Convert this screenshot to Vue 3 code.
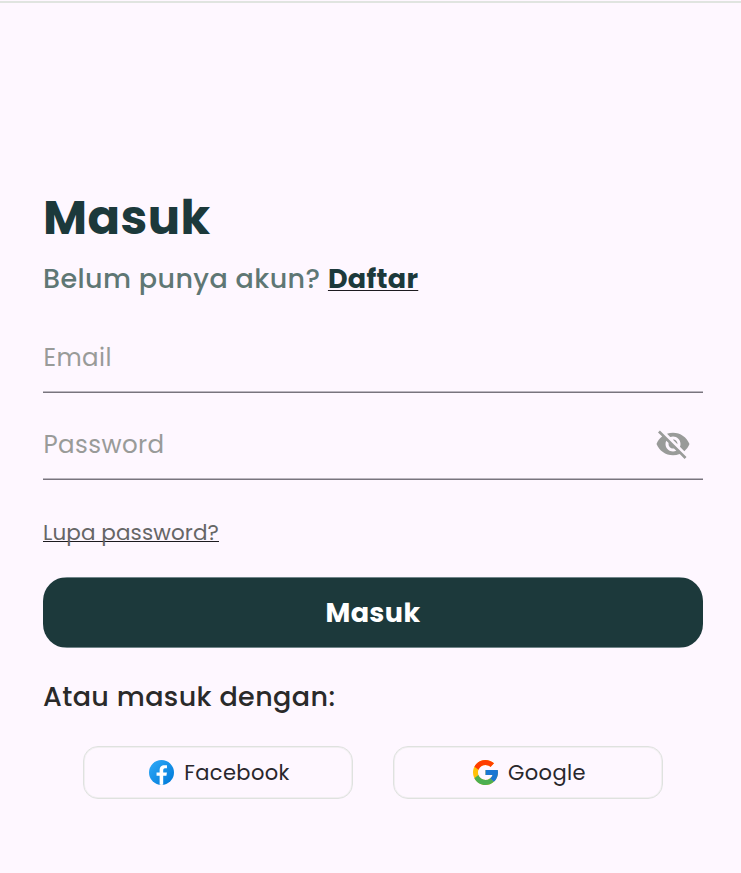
<script setup>
import { ref } from 'vue'

const email = ref('')
const password = ref('')
const visible = ref(false)
</script>

<template>
  <main class="page">
    <h1 class="title"><span>Masuk</span></h1>
    <p class="signup"><span class="question">Belum punya akun?</span><a class="register">Daftar</a></p>

    <form class="form" @submit.prevent>
      <label class="field">
        <input v-model="email" class="input email" type="text" placeholder="Email" />
      </label>
      <label class="field">
        <input v-model="password" class="input password" :type="visible ? 'text' : 'password'" placeholder="Password" />
        <svg class="eye" viewBox="0 0 24 24" @click="visible = !visible">
          <path d="M12 7c2.76 0 5 2.24 5 5 0 .65-.13 1.26-.36 1.83l2.92 2.92c1.51-1.26 2.7-2.89 3.43-4.75-1.73-4.39-6-7.5-11-7.5-1.4 0-2.74.25-3.98.7l2.16 2.16C10.74 7.13 11.35 7 12 7zM2 4.27l2.28 2.28.46.46C3.08 8.3 1.78 10.02 1 12c1.73 4.39 6 7.5 11 7.5 1.55 0 3.03-.3 4.38-.84l.42.42L19.73 22 21 20.73 3.27 3 2 4.27zM7.53 9.8l1.55 1.55c-.05.21-.08.43-.08.65 0 1.66 1.34 3 3 3 .22 0 .44-.03.65-.08l1.55 1.55c-.67.33-1.41.53-2.2.53-2.76 0-5-2.24-5-5 0-.79.2-1.53.53-2.2zm4.31-.78l3.15 3.15.02-.16c0-1.66-1.34-3-3-3l-.17.01z" />
        </svg>
      </label>
      <a class="forgot">Lupa password?</a>
      <button class="submit" type="submit"><span>Masuk</span></button>
    </form>

    <p class="alternative">Atau masuk dengan:</p>
    <div class="socials">
      <button class="social facebook" type="button">
        <svg class="logo" viewBox="5 5 38 38">
          <defs>
            <linearGradient id="fb" x1="9.99" x2="40.59" y1="9.99" y2="40.59" gradientUnits="userSpaceOnUse">
              <stop offset="0" stop-color="#2aa4f4" />
              <stop offset="1" stop-color="#007ad9" />
            </linearGradient>
          </defs>
          <circle cx="24" cy="24" r="19" fill="url(#fb)" />
          <path fill="#fff" d="M26.572 29.036h4.917l.772-4.995h-5.69v-2.73c0-2.075.678-3.915 2.619-3.915h3.119v-4.359c-.548-.074-1.707-.236-3.897-.236-4.573 0-7.254 2.415-7.254 7.917v3.323h-4.701v4.995h4.701v13.729c.931.14 1.874.235 2.842.235.875 0 1.729-.08 2.572-.194z" />
        </svg>
        <span>Facebook</span>
      </button>
      <button class="social google" type="button">
        <svg class="logo" viewBox="4 4 40 40">
          <path fill="#ffc107" d="M43.611 20.083H42V20H24v8h11.303c-1.649 4.657-6.08 8-11.303 8-6.627 0-12-5.373-12-12s5.373-12 12-12c3.059 0 5.842 1.154 7.961 3.039l5.657-5.657C34.046 6.053 29.268 4 24 4 12.955 4 4 12.955 4 24s8.955 20 20 20 20-8.955 20-20c0-1.341-.138-2.65-.389-3.917z" />
          <path fill="#ff3d00" d="m6.306 14.691 6.571 4.819C14.655 15.108 18.961 12 24 12c3.059 0 5.842 1.154 7.961 3.039l5.657-5.657C34.046 6.053 29.268 4 24 4 16.318 4 9.656 8.337 6.306 14.691z" />
          <path fill="#4caf50" d="M24 44c5.166 0 9.86-1.977 13.409-5.192l-6.19-5.238A11.91 11.91 0 0 1 24 36c-5.202 0-9.619-3.317-11.283-7.946l-6.522 5.025C9.505 39.556 16.227 44 24 44z" />
          <path fill="#1976d2" d="M43.611 20.083H42V20H24v8h11.303a12.04 12.04 0 0 1-4.087 5.571l.003-.002 6.19 5.238C36.971 39.205 44 34 44 24c0-1.341-.138-2.65-.389-3.917z" />
        </svg>
        <span>Google</span>
      </button>
    </div>
  </main>
</template>

<style>
body {
  background: #fef7ff;
}
</style>

<style scoped>
.page {
  box-sizing: border-box;
  height: 873px;
  padding: 187px 38px 0 43px;
  background: linear-gradient(#fef7ff 0 1px, #e0e4e0 1px 3px, #fef7ff 3px);
  font-family: Poppins, Inter, sans-serif;
  white-space: nowrap;
  overflow: hidden;
}
.title {
  margin: 0;
  font-size: 48px;
  line-height: 62px;
  font-weight: 700;
  letter-spacing: 0.4px;
  color: #1c393b;
}
.signup {
  display: flex;
  gap: 7.5px;
  margin: 10px 0 0;
  font-size: 27px;
  line-height: 40px;
}
.question {
  font-weight: 500;
  letter-spacing: 0.4px;
  color: #5f7774;
}
.register {
  font-weight: 700;
  letter-spacing: 0.3px;
  color: #1c393b;
  text-decoration: underline 1px #1d1b20;
  text-underline-offset: 2px;
  text-decoration-skip-ink: none;
}
.form {
  display: flex;
  flex-direction: column;
  margin-top: 24px;
}
.field {
  box-sizing: border-box;
  display: flex;
  align-items: center;
  height: 70px;
  padding-right: 12px;
  border-bottom: 1px solid #79747e;
  box-shadow: inset 0 -1px #bbb6bf;
}
.field + .field {
  margin-top: 17px;
}
.input {
  flex: 1;
  min-width: 0;
  height: 70px;
  padding: 0 0 0 0.5px;
  border: 0;
  outline: 0;
  background: none;
  font: 400 24.5px Poppins, Inter, sans-serif;
  letter-spacing: 0.4px;
  color: #1d1b20;
}
.input::placeholder {
  color: #999b99;
  opacity: 1;
}
.eye {
  width: 36px;
  height: 36px;
  margin-top: -2px;
  fill: #999b99;
}
.forgot {
  align-self: flex-start;
  margin-top: 37px;
  font-size: 21.5px;
  line-height: 32px;
  letter-spacing: 0.1px;
  color: #666;
  text-decoration: underline 1px #1d1b20;
  text-underline-offset: 1px;
  text-decoration-skip-ink: none;
}
.submit {
  height: 71px;
  margin-top: 28px;
  padding: 0;
  border: 0;
  border-radius: 24px;
  background: linear-gradient(#72868a 1px, #1c393b 1px calc(100% - 1px), #72868a calc(100% - 1px));
  color: #fff;
  font: 700 27px Poppins, Inter, sans-serif;
  letter-spacing: 0.4px;
}
.alternative {
  margin: 29px 0 0;
  font-size: 27px;
  line-height: 40px;
  font-weight: 500;
  letter-spacing: 0.4px;
  color: #2a2a2a;
}
.socials {
  display: flex;
  gap: 40px;
  margin: 29px 40px 0;
}
.social {
  box-sizing: border-box;
  display: flex;
  flex: 1;
  align-items: center;
  justify-content: center;
  gap: 10px;
  height: 53px;
  padding: 0 0 0 3px;
  border: 1px solid #dfe2df;
  border-radius: 15px;
  box-shadow: inset 0 0 0 1px #f1eff1;
  background: none;
  color: #29272c;
  font: 400 21px Poppins, Inter, sans-serif;
  letter-spacing: 0.38px;
}
.logo {
  width: 25px;
  height: 25px;
}
</style>
